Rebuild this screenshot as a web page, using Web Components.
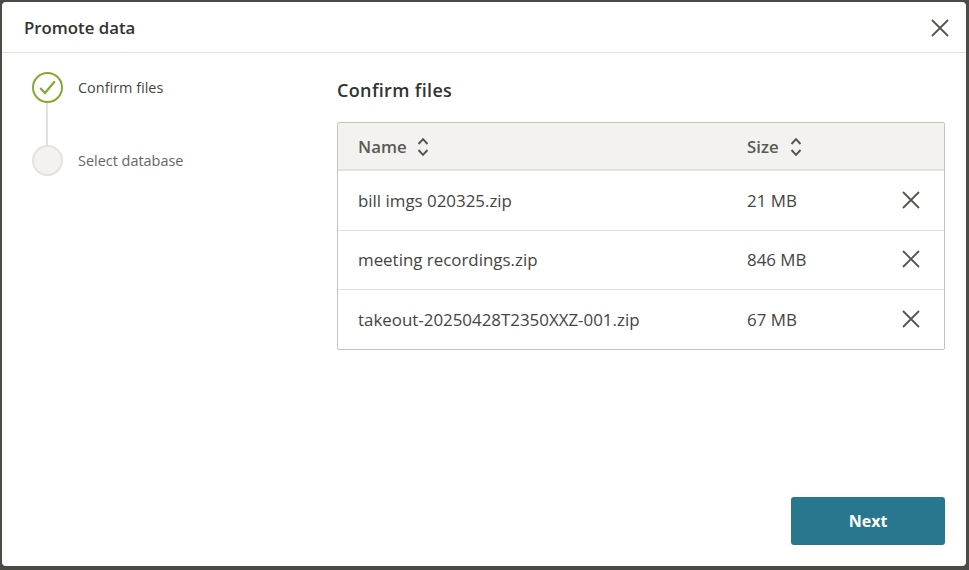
<!DOCTYPE html>
<html lang="en">
<head>
<meta charset="utf-8">
<title>Promote data</title>
<style>
html, body { margin: 0; height: 100%; }
body {
  background: #4b4b46;
  font-family: "Open Sans", "Liberation Sans", sans-serif;
  overflow: hidden;
}
</style>
</head>
<body>
<promote-dialog heading="Promote data">
  <wizard-step slot="steps" state="done" label="Confirm files"></wizard-step>
  <wizard-step slot="steps" label="Select database"></wizard-step>
  <h-title slot="main">Confirm files</h-title>
  <file-table slot="main">
    <file-row name="bill imgs 020325.zip" size="21 MB" style="--row-h:60px;--row-pad:1px"></file-row>
    <file-row name="meeting recordings.zip" size="846 MB" style="--row-pad:2px"></file-row>
    <file-row name="takeout-20250428T2350XXZ-001.zip" size="67 MB" style="--btn-lift:2px" last></file-row>
  </file-table>
  <next-button slot="footer">Next</next-button>
</promote-dialog>

<script>
// little x used by the dialog header and the table rows
const crossIcon = size => `
<svg width="${size}" height="${size}" viewBox="0 0 18 18" fill="none" stroke="#55554f" stroke-width="1.8" aria-hidden="true">
  <path d="M1 1 L17 17 M17 1 L1 17"/>
</svg>`;

class PromoteDialog extends HTMLElement {
  constructor() {
    super();
    this.attachShadow({mode: 'open'});
    this.shadowRoot.innerHTML = `
<style>
:host {
  display: flex;
  flex-direction: column;
  box-sizing: border-box;
  width: 964px;
  height: 564px;
  margin: 2px 0 0 2px;
  background: #fff;
  border-radius: 4px;
  color: #3d3d39;
}
header {
  display: flex;
  align-items: center;
  justify-content: space-between;
  box-sizing: border-box;
  height: 51px;
  padding: 1px 17px 0 22px;
  border-bottom: 1px solid #e3e2de;
}
h2 {
  margin: 0;
  font-size: 16.8px;
  font-weight: 600;
  color: #33332f;
}
button {
  display: flex;
  padding: 0;
  border: 0;
  background: none;
  cursor: pointer;
}
.body {
  flex: 1;
  display: flex;
  min-height: 0;
}
.steps {
  width: 335px;
  box-sizing: border-box;
  padding: 19px 0 0 30px;
}
.main {
  flex: 1;
  display: flex;
  flex-direction: column;
  padding: 0 21px 21px 0;
}
.footer {
  margin-top: auto;
  display: flex;
  justify-content: flex-end;
}
</style>
<header>
  <h2></h2>
  <button aria-label="Close">${crossIcon(18)}</button>
</header>
<div class="body">
  <div class="steps"><slot name="steps"></slot></div>
  <div class="main">
    <slot name="main"></slot>
    <div class="footer"><slot name="footer"></slot></div>
  </div>
</div>`;
    this.shadowRoot.querySelector('h2').textContent = this.getAttribute('heading');
  }
}

class WizardStep extends HTMLElement {
  constructor() {
    super();
    this.attachShadow({mode: 'open'});
    let done = this.getAttribute('state') === 'done';
    this.shadowRoot.innerHTML = `
<style>
:host {
  display: flex;
  align-items: flex-start;
  gap: 15px;
  height: 73px;
  font-size: 14.45px;
  color: ${done ? '#45453f' : '#66665f'};
}
:host(:last-child) { height: auto; }
.mark {
  position: relative;
  box-sizing: border-box;
  width: 31px;
  height: 31px;
  flex: none;
  display: flex;
  align-items: center;
  justify-content: center;
  border-radius: 50%;
  border: 2px solid ${done ? '#85a832' : '#e3e2de'};
  background: ${done ? '#fff' : '#f3f2f0'};
}
.line {
  position: absolute;
  left: 12px;
  top: 29px;
  width: 2px;
  height: 42px;
  background: #e3e2de;
  display: ${done ? 'block' : 'none'};
}
span { line-height: 31px; }
</style>
<div class="mark">
  ${done ? `<svg width="17" height="15" viewBox="0 0 17 15" fill="none" stroke="#85a832" stroke-width="2.2" aria-hidden="true"><path d="M1.2 8 L6 13 L15.8 1.2"/></svg>` : ''}
  <div class="line"></div>
</div>
<span></span>`;
    this.shadowRoot.querySelector('span').textContent = this.getAttribute('label');
  }
}

class HTitle extends HTMLElement {
  constructor() {
    super();
    this.attachShadow({mode: 'open'});
    this.shadowRoot.innerHTML = `
<style>
:host {
  display: block;
  margin: 24px 0 19px;
  font-size: 18px;
  line-height: 26px;
  font-weight: 600;
  letter-spacing: .35px;
  color: #33332f;
}
</style>
<slot></slot>`;
  }
}

class FileTable extends HTMLElement {
  constructor() {
    super();
    this.attachShadow({mode: 'open'});
    const sort = `<svg width="12" height="20" viewBox="0 0 12 20" fill="none" stroke="#55554f" stroke-width="1.9" aria-hidden="true"><path d="M1.5 7 L6 2.2 L10.5 7 M1.5 13 L6 17.8 L10.5 13"/></svg>`;
    this.shadowRoot.innerHTML = `
<style>
:host {
  display: block;
  border: 1px solid #c4c3bc;
  border-radius: 2px;
  overflow: hidden;
}
.head {
  display: grid;
  grid-template-columns: 389px 1fr;
  align-items: center;
  box-sizing: border-box;
  height: 48px;
  padding: 1px 0 0 20px;
  background: #f3f2f0;
  border-bottom: 2px solid #e3e2de;
  font-size: 16.8px;
  font-weight: 600;
  color: #5a5a54;
}
.col {
  display: flex;
  align-items: center;
  gap: 11px;
}
.col:first-child { gap: 10px; }
</style>
<div class="head">
  <div class="col">Name ${sort}</div>
  <div class="col">Size ${sort}</div>
</div>
<slot></slot>`;
  }
}

class FileRow extends HTMLElement {
  constructor() {
    super();
    this.attachShadow({mode: 'open'});
    this.shadowRoot.innerHTML = `
<style>
:host {
  display: grid;
  grid-template-columns: 389px 1fr auto;
  align-items: center;
  box-sizing: border-box;
  height: var(--row-h, 59px);
  padding: 0 24px var(--row-pad, 0) 20px;
  border-bottom: 1px solid #e3e2de;
  font-size: 16.9px;
  color: #45453f;
}
:host([last]) { border-bottom: 0; }
button {
  display: flex;
  padding: 0;
  margin-bottom: var(--btn-lift, 0);
  border: 0;
  background: none;
  cursor: pointer;
}
</style>
<span class="name"></span>
<span class="size"></span>
<button aria-label="Remove">${crossIcon(18)}</button>`;
    this.shadowRoot.querySelector('.name').textContent = this.getAttribute('name');
    this.shadowRoot.querySelector('.size').textContent = this.getAttribute('size');
  }
}

class NextButton extends HTMLElement {
  constructor() {
    super();
    this.attachShadow({mode: 'open'});
    this.shadowRoot.innerHTML = `
<style>
:host { display: block; }
button {
  display: block;
  width: 154px;
  height: 48px;
  padding: 0;
  border: 0;
  border-radius: 3px;
  background: #29768f;
  color: #fff;
  font: 700 16px "Open Sans", "Liberation Sans", sans-serif;
  cursor: pointer;
}
</style>
<button><slot></slot></button>`;
  }
}

window.customElements.define('promote-dialog', PromoteDialog);
window.customElements.define('wizard-step', WizardStep);
window.customElements.define('h-title', HTitle);
window.customElements.define('file-table', FileTable);
window.customElements.define('file-row', FileRow);
window.customElements.define('next-button', NextButton);
</script>
</body>
</html>
